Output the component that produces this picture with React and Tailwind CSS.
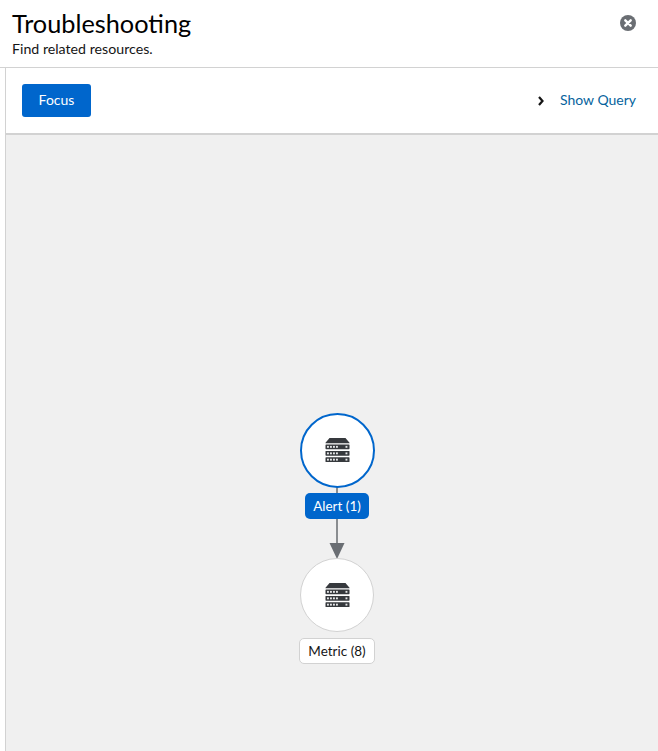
const ServerIcon = () => (
  <svg className="w-[25px] h-6" viewBox="0 0 25 24" fill="#36393d">
    <path d="M4.5 0h16l4 4.8v0.4H0.5v-0.4z" />
    {[6.5, 13, 19.3].map((y) => (
      <g key={y}>
        <rect x="0.5" y={y} width="24" height="4.7" rx="0.6" />
        <g fill="#e4e5e6">
          <rect x="2" y={y + 1.4} width="1.9" height="1.9" />
          <rect x="5" y={y + 1.4} width="1.9" height="1.9" />
          <rect x="8" y={y + 1.4} width="1.9" height="1.9" />
          <rect x="11" y={y + 1.4} width="1.9" height="1.9" />
          <rect x="20.5" y={y + 1.4} width="1.9" height="1.9" />
        </g>
      </g>
    ))}
  </svg>
);

const GraphNode = ({ className, children }) => (
  <div className={`absolute rounded-full bg-white flex items-center justify-center ${className}`}>
    {children}
  </div>
);

const App = () => {
  return (
    <div
      className="w-[658px] h-[751px] overflow-hidden bg-white flex flex-col text-[#151515]"
      style={{ fontFamily: 'Lato, "Noto Sans", sans-serif' }}
    >
      {/* header */}
      <div className="h-[68px] shrink-0 border-b border-[#d2d2d2] pl-3 pr-[22px] flex justify-between">
        <div>
          <h1 className="text-[25.3px] leading-[30px] mt-2 text-black">Troubleshooting</h1>
          <p className="text-[14.2px] leading-[18px] mt-0.5">Find related resources.</p>
        </div>
        <button className="h-4 mt-[15px]">
          <svg className="w-4 h-4" viewBox="0 0 16 16">
            <circle cx="8" cy="8" r="8" fill="#6a6e73" />
            <path d="M5.3 5.3l5.4 5.4M10.7 5.3l-5.4 5.4" stroke="#fff" strokeWidth="2.4" strokeLinecap="round" />
          </svg>
        </button>
      </div>

      <div className="flex-1 ml-[5px] border-l border-[#d2d2d2] flex flex-col min-h-0">
        {/* toolbar */}
        <div className="h-[67px] shrink-0 border-b-[2px] border-[#d2d2d2] pl-4 pr-[22px] flex items-center justify-between">
          <button className="w-[69px] h-[33px] rounded-[3px] bg-[#0066cc] text-white text-[14px] pb-0.5">Focus</button>
          <div className="flex items-center gap-[15px]">
            <svg className="w-2 h-2.5" viewBox="0 0 8 10">
              <path d="M2 1l3.5 4L2 9" fill="none" stroke="#151515" strokeWidth="2.2" />
            </svg>
            <a className="text-[14px] leading-[18px] pb-0.5 text-[#06639d]">Show Query</a>
          </div>
        </div>

        {/* graph canvas */}
        <div className="relative flex-1 bg-[#f0f0f0]">
          <div className="absolute left-[330px] top-[352px] w-0.5 h-[57px] bg-[#8a8d90]" />
          <svg className="absolute left-[323px] top-[408px] w-[16px] h-[16px]" viewBox="0 0 16 16">
            <path d="M0.5 0h15L8 16z" fill="#6a6e73" />
          </svg>

          <GraphNode className="left-[293.5px] top-[277.5px] w-[75px] h-[75px] border-2 border-[#0066cc]">
            <ServerIcon />
          </GraphNode>
          <div className="absolute left-[299px] top-[358px] w-16 h-[26px] rounded-[5px] bg-[#0066cc] text-white text-[13.5px] flex items-center justify-center">
            Alert (1)
          </div>

          <GraphNode className="left-[294px] top-[423px] w-[74px] h-[74px] border border-[#d2d2d2]">
            <ServerIcon />
          </GraphNode>
          <div className="absolute left-[293px] top-[503px] w-[76px] h-[26px] rounded-[5px] bg-white border border-[#d2d2d2] text-[13.5px] flex items-center justify-center">
            Metric (8)
          </div>
        </div>
      </div>
    </div>
  );
};

export default App;
